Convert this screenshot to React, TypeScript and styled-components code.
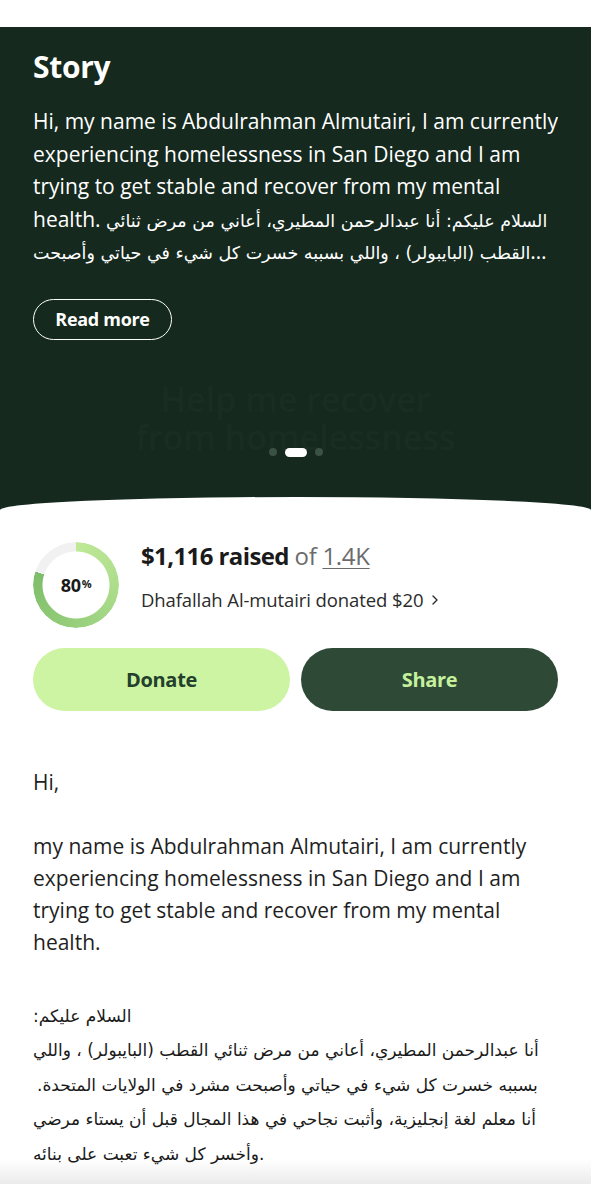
import React from "react";
import styled, { createGlobalStyle } from "styled-components";
import { ChevronRight } from "lucide-react";

const GlobalStyle = createGlobalStyle`
  html, body { margin: 0; padding: 0; background: #ffffff; }
  body {
    font-family: "Open Sans", "DejaVu Sans", sans-serif;
    -webkit-font-smoothing: antialiased;
  }
  * { box-sizing: border-box; }
`;

const Page = styled.div`
  width: 591px;
  min-height: 1200px;
  overflow: hidden;
  padding-top: 27px;
  background: #ffffff;
`;

const StorySection = styled.section`
  background: #15291e;
  color: #ffffff;
  padding: 20px 33px 54px;
`;

const StoryTitle = styled.h2`
  margin: 0;
  font-size: 30px;
  line-height: 40px;
  font-weight: 700;
  letter-spacing: -0.3px;
`;

const StoryExcerpt = styled.p`
  margin: 18px 0 0;
  font-size: 21px;
  line-height: 32.5px;
  font-weight: 400;
  display: -webkit-box;
  -webkit-line-clamp: 5;
  -webkit-box-orient: vertical;
  overflow: hidden;
`;

const ArabicInline = styled.span`
  font-family: "DejaVu Sans", sans-serif;
  font-size: 17.5px;
  line-height: 1;
`;

const OutlineButton = styled.button`
  margin-top: 31px;
  height: 41px;
  width: 139px;
  border-radius: 21px;
  border: 1.5px solid #ffffff;
  background: transparent;
  color: #ffffff;
  font-family: inherit;
  font-size: 18px;
  font-weight: 700;
  letter-spacing: -0.3px;
  display: flex;
  align-items: center;
  justify-content: center;
`;

const Carousel = styled.div`
  position: relative;
  margin-top: 40px;
`;

const GhostTitle = styled.div`
  text-align: center;
  font-size: 34px;
  line-height: 38px;
  font-weight: 600;
  color: #192d21;
  padding: 0 100px;
`;

const Dots = styled.div`
  position: absolute;
  left: 0;
  right: 0;
  top: 68px;
  display: flex;
  justify-content: center;
  align-items: center;
  gap: 8px;
`;

const Dot = styled.span<{ $active?: boolean }>`
  display: block;
  height: ${(p) => (p.$active ? 9 : 8)}px;
  width: ${(p) => (p.$active ? 22 : 8)}px;
  border-radius: 5px;
  background: ${(p) => (p.$active ? "#ffffff" : "#3c5145")};
`;

const Main = styled.main`
  position: relative;
  margin-top: -13px;
  background: #ffffff;
  border-radius: 50% 50% 0 0 / 13px 13px 0 0;
  padding: 45px 33px 0;
`;

const StatsRow = styled.div`
  display: flex;
  align-items: flex-start;
  gap: 22px;
`;

const Ring = styled.div`
  position: relative;
  flex: none;
  width: 86px;
  height: 86px;
  display: flex;
  align-items: center;
  justify-content: center;

  &::before {
    content: "";
    position: absolute;
    inset: 0;
    border-radius: 50%;
    background: conic-gradient(
      #bfe997 0deg,
      #a6d987 120deg,
      #7dbd69 288deg,
      #f1f1f1 288deg,
      #f1f1f1 360deg
    );
    -webkit-mask: radial-gradient(circle, transparent 33px, #000 34px);
    mask: radial-gradient(circle, transparent 33px, #000 34px);
  }
`;

const RingLabel = styled.span`
  position: relative;
  font-size: 18px;
  font-weight: 700;
  color: #1a1a1a;
  letter-spacing: -0.3px;

  small {
    font-size: 11px;
    font-weight: 700;
    vertical-align: 4px;
    margin-left: 1px;
  }
`;

const Info = styled.div`
  margin-top: -2px;
  display: flex;
  flex-direction: column;
`;

const Raised = styled.div`
  font-size: 24px;
  line-height: 32px;
  font-weight: 700;
  color: #1a1a1a;
  letter-spacing: -0.6px;
`;

const Goal = styled.span`
  font-weight: 400;
  color: #6b6b6b;
  letter-spacing: -0.3px;
`;

const GoalAmount = styled.span`
  text-decoration: underline;
  text-decoration-thickness: 1px;
  text-underline-offset: 3px;
`;

const Donor = styled.div`
  margin-top: 15px;
  display: flex;
  align-items: center;
  gap: 4px;
  font-size: 18.5px;
  line-height: 26px;
  color: #2b2b2b;
  letter-spacing: -0.1px;
`;

const Actions = styled.div`
  margin-top: 20px;
  display: grid;
  grid-template-columns: 1fr 1fr;
  gap: 11px;
`;

const ActionButton = styled.button<{ $variant: "light" | "dark" }>`
  height: 63px;
  border: none;
  border-radius: 32px;
  font-family: inherit;
  font-size: 20px;
  font-weight: 700;
  letter-spacing: -0.3px;
  background: ${(p) => (p.$variant === "light" ? "#cdf4a2" : "#2e4a37")};
  color: ${(p) => (p.$variant === "light" ? "#22402b" : "#c6f19c")};
`;

const Body = styled.div`
  margin-top: 55px;
  font-size: 21px;
  line-height: 32px;
  color: #1f1f1f;
  white-space: pre-line;
`;

const ArabicBlock = styled.div`
  margin-top: 41px;
  font-family: "DejaVu Sans", sans-serif;
  font-size: 17px;
  line-height: 34.5px;
  color: #1a1a1a;
`;

const ArabicLine = styled.div<{ $dir: "ltr" | "rtl"; $indent?: number }>`
  direction: ${(p) => p.$dir};
  text-align: left;
  padding-left: ${(p) => p.$indent ?? 0}px;
`;

const BottomFade = styled.div`
  margin: -12px -33px 0;
  height: 25px;
  background: linear-gradient(to bottom, rgba(255, 255, 255, 0), #ebebeb);
`;

export default function App() {
  return (
    <>
      <GlobalStyle />
      <Page>
        <StorySection>
          <StoryTitle>Story</StoryTitle>
          <StoryExcerpt>
            Hi, my name is Abdulrahman Almutairi, I am currently experiencing homelessness in San Diego and I am
            trying to get stable and recover from my mental health.{" "}
            <ArabicInline>
              السلام عليكم: أنا عبدالرحمن المطيري، أعاني من مرض ثنائي القطب (البايبولر) ، واللي بسببه خسرت كل شيء
              في حياتي وأصبحت مشرد في الولايات المتحدة.
            </ArabicInline>
          </StoryExcerpt>
          <OutlineButton>Read more</OutlineButton>
          <Carousel>
            <GhostTitle>Help me recover from homelessness</GhostTitle>
            <Dots>
              <Dot />
              <Dot $active />
              <Dot />
            </Dots>
          </Carousel>
        </StorySection>
        <Main>
          <StatsRow>
            <Ring>
              <RingLabel>
                80<small>%</small>
              </RingLabel>
            </Ring>
            <Info>
              <Raised>
                $1,116 raised <Goal>of <GoalAmount>1.4K</GoalAmount></Goal>
              </Raised>
              <Donor>
                Dhafallah Al-mutairi donated $20
                <ChevronRight size={16} strokeWidth={2} />
              </Donor>
            </Info>
          </StatsRow>
          <Actions>
            <ActionButton $variant="light">Donate</ActionButton>
            <ActionButton $variant="dark">Share</ActionButton>
          </Actions>
          <Body>
            {"Hi,\n\nmy name is Abdulrahman Almutairi, I am currently experiencing homelessness in San Diego and I am trying to get stable and recover from my mental health."}
          </Body>
          <ArabicBlock>
            <ArabicLine $dir="rtl">السلام عليكم:</ArabicLine>
            <ArabicLine $dir="rtl">أنا عبدالرحمن المطيري، أعاني من مرض ثنائي القطب (البايبولر) ، واللي</ArabicLine>
            <ArabicLine $dir="rtl" $indent={4}>بسببه خسرت كل شيء في حياتي وأصبحت مشرد في الولايات المتحدة.</ArabicLine>
            <ArabicLine $dir="rtl">أنا معلم لغة إنجليزية، وأثبت نجاحي في هذا المجال قبل أن يستاء مرضي</ArabicLine>
            <ArabicLine $dir="ltr">وأخسر كل شيء تعبت على بنائه.</ArabicLine>
          </ArabicBlock>
          <BottomFade />
        </Main>
      </Page>
    </>
  );
}
